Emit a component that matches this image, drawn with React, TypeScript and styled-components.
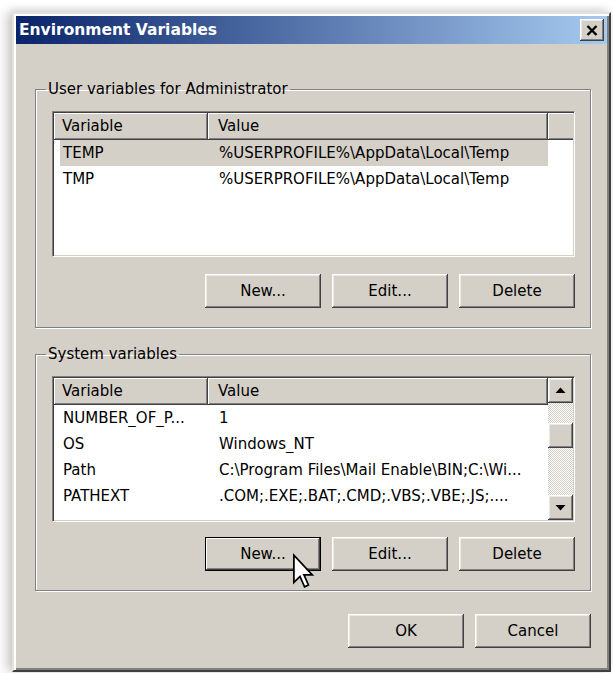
import React from 'react';
import styled, { createGlobalStyle, css } from 'styled-components';

const Global = createGlobalStyle`
  html, body { margin: 0; padding: 0; background: #ffffff; }
  body {
    font-family: "DejaVu Sans", "Liberation Sans", sans-serif;
    font-size: 15px;
    color: #000;
    overflow: hidden;
  }
  * { box-sizing: border-box; }
`;

const FACE = '#d4d0c8';

const Page = styled.div`
  width: 613px;
  height: 673px;
  padding: 12px 0 0 12px;
`;

const Window = styled.div`
  position: relative;
  width: 599px;
  height: 660px;
  display: flex;
  flex-direction: column;
  background: ${FACE};
  padding: 2px;
  border: 2px solid;
  border-color: #e4e1dc #404040 #404040 #e4e1dc;
  box-shadow: inset 2px 2px 0 #ffffff, inset -2px -2px 0 #808080,
    -6px 0 10px rgba(0, 0, 0, 0.18), 0 -3px 8px rgba(0, 0, 0, 0.08);
`;

const TitleBar = styled.div`
  height: 28px;
  flex: none;
  display: flex;
  align-items: center;
  justify-content: space-between;
  padding: 0 3px 0 3px;
  background: linear-gradient(to right, #0a246a 0%, #a6caf0 100%);
`;

const Title = styled.span`
  color: #fff;
  font-weight: bold;
  font-size: 15.5px;
`;

const bevel = css`
  background: ${FACE};
  border: none;
  box-shadow: inset -1px -1px 0 #404040, inset 1px 1px 0 #ffffff,
    inset -2px -2px 0 #808080, inset 2px 2px 0 #ece9e4;
`;

const CloseButton = styled.div`
  ${bevel};
  width: 24px;
  height: 22px;
  display: flex;
  align-items: center;
  justify-content: center;
`;

const Body = styled.div`
  flex: 1;
  display: flex;
  flex-direction: column;
  padding: 37px 16px 0 19px;
`;

const Group = styled.fieldset<{ $gap?: number; $bottom: number }>`
  margin: ${(p) => p.$gap ?? 0}px 0 0 0;
  padding: 14px 15px ${(p) => p.$bottom}px 16px;
  border: 1px solid #808080;
  box-shadow: inset 1px 1px 0 #ffffff, 1px 1px 0 #ffffff;
  min-width: 0;
  display: flex;
  flex-direction: column;
`;

const Legend = styled.legend`
  margin-left: -6px;
  padding: 0 2px;
  line-height: 16px;
  font-size: 15px;
`;

const List = styled.div`
  height: 146px;
  background: #fff;
  border: 1px solid;
  border-color: #808080 #ffffff #ffffff #808080;
  box-shadow: inset 1px 1px 0 #404040, inset -1px -1px 0 ${FACE};
  padding: 1px;
  display: flex;
  overflow: hidden;
`;

const ListMain = styled.div`
  flex: 1;
  display: flex;
  flex-direction: column;
  min-width: 0;
`;

const Header = styled.div<{ $filler?: boolean }>`
  display: grid;
  grid-template-columns: ${(p) => (p.$filler ? '154px 340px 1fr' : '154px 340px')};
  height: 27px;
  flex: none;
  background: ${FACE};
`;

const HeaderCell = styled.div<{ $pad: number }>`
  display: flex;
  align-items: center;
  padding-left: ${(p) => p.$pad}px;
  box-shadow: inset 1px 1px 0 #ffffff, inset -1px -1px 0 #808080;
  border-right: 1px solid #404040;
  border-bottom: 1px solid #404040;
  white-space: nowrap;
`;

const HeaderFiller = styled.div`
  box-shadow: inset 1px 1px 0 #ffffff, inset 0 -1px 0 #808080;
  border-bottom: 1px solid #404040;
`;

const Row = styled.div<{ $selected?: boolean }>`
  display: grid;
  grid-template-columns: 148px 340px;
  width: 488px;
  margin-left: 6px;
  height: 26px;
  flex: none;
  align-items: center;
  background: ${(p) => (p.$selected ? FACE : 'transparent')};
  white-space: nowrap;
`;

const Cell = styled.div<{ $pad: number }>`
  padding-left: ${(p) => p.$pad}px;
  overflow: hidden;
`;

const ScrollBar = styled.div`
  width: 25px;
  flex: none;
  display: flex;
  flex-direction: column;
`;

const ScrollButton = styled.div`
  ${bevel};
  width: 25px;
  height: 25px;
  flex: none;
  display: flex;
  align-items: center;
  justify-content: center;
`;

const Track = styled.div`
  flex: 1;
  padding-top: 20px;
  background-color: #ffffff;
  background-image: conic-gradient(${FACE} 25%, #ffffff 0 50%, ${FACE} 0 75%, #ffffff 0);
  background-size: 2px 2px;
`;

const Thumb = styled.div`
  ${bevel};
  height: 25px;
`;

const ButtonRow = styled.div<{ $top: number }>`
  display: flex;
  justify-content: flex-end;
  gap: 11px;
  margin-top: ${(p) => p.$top}px;
`;

const Button = styled.div<{ $default?: boolean }>`
  ${bevel};
  position: relative;
  width: 116px;
  height: 34px;
  display: flex;
  align-items: center;
  justify-content: center;
  font-size: 15px;
  ${(p) =>
    p.$default &&
    css`
      border: 1px solid #000;
      box-shadow: inset -1px -1px 0 #404040, inset 1px 1px 0 #ffffff,
        inset -2px -2px 0 #808080;
    `}
`;

const Pointer = styled.svg`
  position: absolute;
  left: 87px;
  top: 16px;
  overflow: visible;
`;

const Triangle = ({ up }: { up?: boolean }) => (
  <svg width="11" height="7" viewBox="0 0 11 7">
    <path d={up ? 'M5.5 0.5 L10.5 6 L0.5 6 Z' : 'M0.5 1 L10.5 1 L5.5 6.5 Z'} fill="#000" />
  </svg>
);

type Var = { name: string; value: string; selected?: boolean };

const userVars: Var[] = [
  { name: 'TEMP', value: '%USERPROFILE%\\AppData\\Local\\Temp', selected: true },
  { name: 'TMP', value: '%USERPROFILE%\\AppData\\Local\\Temp' },
];

const sysVars: Var[] = [
  { name: 'NUMBER_OF_P...', value: '1' },
  { name: 'OS', value: 'Windows_NT' },
  { name: 'Path', value: 'C:\\Program Files\\Mail Enable\\BIN;C:\\Wi...' },
  { name: 'PATHEXT', value: '.COM;.EXE;.BAT;.CMD;.VBS;.VBE;.JS;....' },
];

const VarList = ({ vars, scroll }: { vars: Var[]; scroll?: boolean }) => (
  <List>
    <ListMain>
      <Header $filler={!scroll}>
        <HeaderCell $pad={8}>Variable</HeaderCell>
        <HeaderCell $pad={10}>Value</HeaderCell>
        {!scroll && <HeaderFiller />}
      </Header>
      {vars.map((v) => (
        <Row key={v.name} $selected={v.selected}>
          <Cell $pad={3}>{v.name}</Cell>
          <Cell $pad={11}>{v.value}</Cell>
        </Row>
      ))}
    </ListMain>
    {scroll && (
      <ScrollBar>
        <ScrollButton>
          <Triangle up />
        </ScrollButton>
        <Track>
          <Thumb />
        </Track>
        <ScrollButton>
          <Triangle />
        </ScrollButton>
      </ScrollBar>
    )}
  </List>
);

export default function App() {
  return (
    <>
      <Global />
      <Page>
        <Window>
          <TitleBar>
            <Title>Environment Variables</Title>
            <CloseButton>
              <svg width="12" height="11" viewBox="0 0 12 11">
                <path d="M1.5 1 L10.5 10 M10.5 1 L1.5 10" stroke="#000" strokeWidth="2.4" />
              </svg>
            </CloseButton>
          </TitleBar>
          <Body>
            <Group $bottom={19}>
              <Legend>User variables for Administrator</Legend>
              <VarList vars={userVars} />
              <ButtonRow $top={17}>
                <Button>New...</Button>
                <Button>Edit...</Button>
                <Button>Delete</Button>
              </ButtonRow>
            </Group>
            <Group $gap={18} $bottom={19}>
              <Legend>System variables</Legend>
              <VarList vars={sysVars} scroll />
              <ButtonRow $top={15}>
                <Button $default>
                  New...
                  <Pointer width="21" height="34" viewBox="0 0 12 19">
                    <path
                      d="M0.5 0.5 L0.5 16 L4 12.6 L6.6 18.5 L8.8 17.5 L6.3 11.7 L11 11.7 Z"
                      fill="#fff"
                      stroke="#000"
                      strokeWidth="1"
                      strokeLinejoin="miter"
                    />
                  </Pointer>
                </Button>
                <Button>Edit...</Button>
                <Button>Delete</Button>
              </ButtonRow>
            </Group>
            <ButtonRow $top={23}>
              <Button>OK</Button>
              <Button>Cancel</Button>
            </ButtonRow>
          </Body>
        </Window>
      </Page>
    </>
  );
}
